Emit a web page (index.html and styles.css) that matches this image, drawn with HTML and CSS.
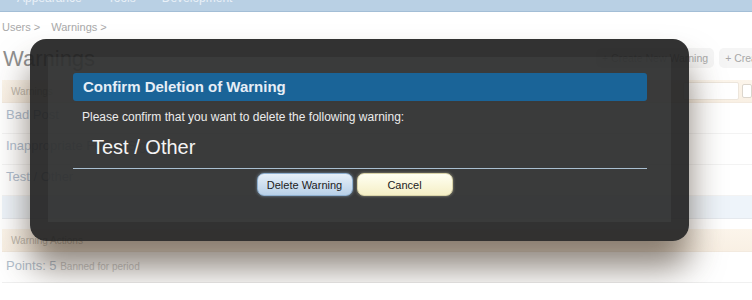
FILE: index.html
```html
<!DOCTYPE html>
<html lang="en">
<head>
  <meta charset="UTF-8">
  <title>Warnings</title>
  <link rel="stylesheet" href="styles.css">
</head>
<body>

  <div class="topbar">
    <div class="nav">
      <span>Appearance</span>
      <span>Tools</span>
      <span>Development</span>
    </div>
    <div class="visitor">Rich and B</div>
  </div>

  <div class="page">
    <div class="crumbs">
      <span>Users &gt;</span>
      <span>Warnings &gt;</span>
    </div>

    <div class="title-row">
      <h1>Warnings</h1>
      <div class="actions">
        <span class="btn-top">+ Create New Warning</span>
        <span class="btn-top">+ Create New Warning Action</span>
      </div>
    </div>

    <div class="section-head">
      <span>Warnings</span>
      <div class="filter">
        <span class="filter-input"></span>
        <span class="filter-box"></span>
      </div>
    </div>
    <ul class="list">
      <li>Bad Post</li>
      <li>Inappropriate Forum Signature</li>
      <li>Test / Other</li>
      <li class="selected"></li>
    </ul>

    <div class="section-head actions-head">
      <span>Warning Actions</span>
    </div>
    <div class="points">Points: 5 <small>Banned for period</small></div>
  </div>

  <div class="overlay">
    <div class="overlay-inner">
      <h2 class="dialog-title">Confirm Deletion of Warning</h2>
      <p class="dialog-text">Please confirm that you want to delete the following warning:</p>
      <div class="dialog-item">Test / Other</div>
      <div class="dialog-buttons">
        <button class="btn btn-primary">Delete Warning</button>
        <button class="btn btn-cancel">Cancel</button>
      </div>
    </div>
  </div>

</body>
</html>
```

FILE: styles.css
```css
body {
  margin: 0;
  font-family: "Liberation Sans", Arial, sans-serif;
  background-color: #fff;
  position: relative;
  overflow: hidden;
}

.topbar {
  height: 11px;
  background-color: #b9d0e4;
  border-bottom: 1px solid #a3bed6;
  overflow: hidden;
  display: flex;
  justify-content: space-between;
}

.nav {
  margin-top: -9px;
  padding-left: 17px;
  font-size: 12px;
  color: #eaf1f8;
  display: flex;
  gap: 26px;
}

.visitor {
  margin-top: -10px;
  padding-right: 8px;
  font-size: 11px;
  color: #eaf1f8;
}

.page {
  padding: 0 0 0 2px;
}

.crumbs {
  font-size: 11px;
  color: #a9a9a9;
  height: 20px;
  line-height: 20px;
  margin-top: 5px;
  display: flex;
  gap: 11px;
}

.title-row {
  display: flex;
  justify-content: space-between;
  align-items: center;
  height: 40px;
  margin-top: 2px;
  overflow: hidden;
}

.title-row h1 {
  margin: 0 0 0 1px;
  font-size: 22px;
  font-weight: normal;
  color: #8f8f8f;
}

.actions {
  width: 156px;
  flex-shrink: 0;
  display: flex;
  gap: 5px;
  margin-top: -2px;
  white-space: nowrap;
}

.btn-top {
  flex-shrink: 0;
  font-size: 10.5px;
  color: #a8a8a8;
  background-color: #f5f5f5;
  border-radius: 5px;
  padding: 4px 6px;
}

.section-head {
  margin-top: 1px;
  height: 22px;
  background: linear-gradient(#fcf5eb, #f9f0e4);
  border-bottom: 1px solid #f3eadf;
  display: flex;
  align-items: center;
  justify-content: space-between;
  padding-left: 9px;
  font-size: 10px;
  color: #c0b8ad;
}

.filter {
  display: flex;
  gap: 3px;
  align-items: center;
}

.filter-input {
  width: 54px;
  height: 16px;
  background-color: #fff;
  border: 1px solid #ede6dc;
  border-radius: 2px;
}

.filter-box {
  width: 8px;
  height: 12px;
  border: 1px solid #dcd6cd;
  border-radius: 2px;
  background-color: #fff;
}

.list {
  list-style: none;
  margin: 0;
  padding: 0;
}

.list li {
  height: 30px;
  line-height: 24px;
  padding-left: 4px;
  font-size: 13px;
  color: #b0bed0;
  border-bottom: 1px solid #f3f3f3;
}

.list li.selected {
  height: 22px;
  background-color: #eef4fa;
  border-bottom: 1px solid #e5e9ee;
}

.actions-head {
  margin-top: 10px;
}

.points {
  height: 30px;
  line-height: 28px;
  padding-left: 4px;
  font-size: 13px;
  color: #b3bfce;
  border-bottom: 1px solid #f0f0f0;
}

.points small {
  font-size: 10px;
  color: #cacaca;
}

/* dialog */

.overlay {
  position: absolute;
  left: 30px;
  top: 39px;
  width: 623px;
  padding: 18px 18px 19px 18px;
  background-color: rgba(30, 30, 30, 0.91);
  border-radius: 16px;
  box-shadow: 0 26px 34px rgba(60, 45, 30, 0.6);
}

.overlay-inner {
  background-color: rgba(75, 77, 78, 0.35);
  padding: 16px 24px 26px 25px;
}

.dialog-title {
  margin: 0;
  height: 28px;
  line-height: 28px;
  padding-left: 10px;
  background-color: #1a6498;
  border-radius: 3px;
  font-size: 15px;
  font-weight: bold;
  color: #e6eef6;
}

.dialog-text {
  margin: 9px 0 0 9px;
  font-size: 12px;
  line-height: 15px;
  color: #ececec;
}

.dialog-item {
  margin-top: 10px;
  padding: 0 0 9px 19px;
  font-size: 20px;
  line-height: 24px;
  color: #f4f4f4;
  border-bottom: 1px solid #a9bfd1;
}

.dialog-buttons {
  display: flex;
  justify-content: center;
  gap: 4px;
  margin-top: 4px;
  padding-right: 11px;
}

.btn {
  width: 96px;
  height: 23px;
  border-radius: 7px;
  font-family: "Liberation Sans", Arial, sans-serif;
  font-size: 11px;
  color: #222;
  cursor: pointer;
}

.btn-primary {
  background: linear-gradient(#e6eff8, #b8d0e8);
  border: 1px solid #8fb0d0;
  box-shadow: 0 0 3px rgba(160, 195, 230, 0.6);
}

.btn-cancel {
  background: linear-gradient(#fffff2, #f5efc6);
  border: 1px solid #d9d3a8;
  box-shadow: 0 0 3px rgba(240, 235, 200, 0.5);
}
```
